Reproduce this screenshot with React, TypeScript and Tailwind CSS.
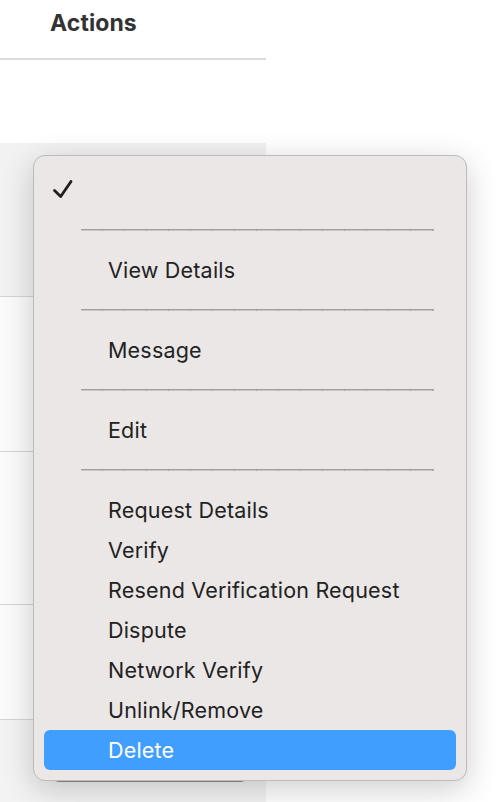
import React from "react";

const Sep = () => (
  <div className="h-[40px] pt-[19px] pl-[37px]">
    <div className="w-[353px] h-[1px] bg-[#a0a0a0]" />
    <div className="w-[353px] h-[1px] bg-[#cac6c5]">
      <div className="w-full h-full bg-[repeating-linear-gradient(to_right,transparent_0_21px,#a4a4a4_21px_22px)]" />
    </div>
  </div>
);

const Item = ({ label, active = false }: { label: string; active?: boolean }) => (
  <div
    className={
      "h-[40px] flex items-center pl-[64px] pt-[1px] text-[21.5px] leading-none tracking-[0.2px] " +
      (active ? "bg-[#409eff] text-white rounded-[6px]" : "text-[#222222]")
    }
  >
    {label}
  </div>
);

export default function App() {
  return (
    <div
      className="relative w-[500px] h-[802px] bg-white overflow-hidden"
      style={{ fontFamily: "Inter, 'Noto Sans', Arial, sans-serif" }}
    >
      {/* table column */}
      <div className="w-[266px] flex flex-col h-full">
        <div className="h-[58px] pl-[50px] pt-[6px] text-[23px] font-bold text-[#333333] tracking-[0.1px]">
          Actions
        </div>
        <div className="h-[2px] bg-[#dcdcdc]" />
        <div className="h-[83px]" />
        <div className="h-[154px] bg-[#f2f2f2] border-b border-[#d4d4d4]" />
        <div className="h-[155px] bg-[#fbfbfb] border-b border-[#d4d4d4]" />
        <div className="h-[153px] bg-[#fbfbfb] border-b border-[#d4d4d4]" />
        <div className="h-[115px] bg-[#fbfbfb] border-b border-[#d4d4d4]" />
        <div className="flex-1 bg-[#f3f3f3] pt-[28px] pl-[53px]">
          <div className="w-[194px] h-[34px] rounded-md bg-[#e6e6e6] border-b-[3px] border-[#8f8f8f]" />
        </div>
      </div>

      {/* dropdown menu */}
      <div className="absolute left-[33px] top-[155px] w-[434px] h-[626px] rounded-[12px] border border-[#bcbcbc] bg-[#eae7e6] shadow-[0_8px_32px_rgba(0,0,0,0.2)] pt-[14px] pb-[10px] px-[10px]">
        <div className="h-[40px] pl-[8px] pt-[9px]">
          <svg width="22" height="20" viewBox="0 0 22 20">
            <path
              d="M2.5 11.5 L8.7 17.5 L19 2.5"
              fill="none"
              stroke="#1f1f1f"
              strokeWidth="2.8"
              strokeLinecap="round"
              strokeLinejoin="round"
            />
          </svg>
        </div>
        <Sep />
        <Item label="View Details" />
        <Sep />
        <Item label="Message" />
        <Sep />
        <Item label="Edit" />
        <Sep />
        <Item label="Request Details" />
        <Item label="Verify" />
        <Item label="Resend Verification Request" />
        <Item label="Dispute" />
        <Item label="Network Verify" />
        <Item label="Unlink/Remove" />
        <Item label="Delete" active />
      </div>
    </div>
  );
}
